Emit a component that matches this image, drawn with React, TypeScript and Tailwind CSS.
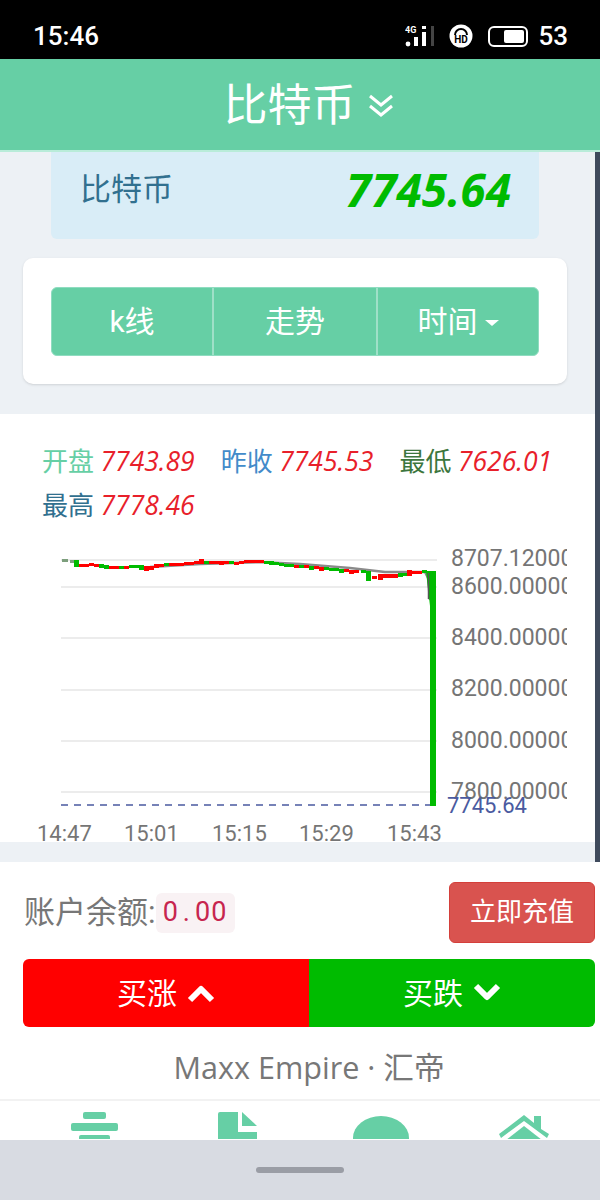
const up = "#ff0000";
const down = "#00bb00";

// [x, top, height, colour]
const candles: [number, number, number, string][] = [
  [76, 560, 7, down], [81, 564, 3, up], [86, 564, 3, up], [91, 563, 3, up], [96, 564, 3, up], [101, 564, 4, down],
  [106, 565, 4, down], [111, 566, 3, up], [116, 566, 3, up], [121, 566, 3, down], [126, 566, 3, up], [131, 565, 3, down],
  [136, 565, 3, down], [141, 565, 5, down], [146, 566, 5, up], [151, 566, 4, up], [156, 564, 4, up], [161, 564, 3, up],
  [166, 563, 3, down], [171, 563, 3, up], [176, 563, 3, up], [181, 563, 3, up], [186, 562, 3, up], [191, 562, 3, up],
  [196, 561, 3, up], [201, 559, 5, up], [206, 561, 3, down], [211, 561, 3, up], [216, 561, 3, up], [221, 561, 4, up],
  [226, 561, 3, up], [231, 561, 3, down], [236, 562, 3, up], [241, 561, 3, up], [246, 560, 3, up], [251, 560, 3, up],
  [256, 560, 3, up], [261, 560, 3, up], [266, 561, 3, down], [271, 561, 4, down], [276, 562, 3, down], [281, 563, 3, down],
  [286, 564, 3, down], [291, 564, 3, down], [296, 565, 3, up], [301, 565, 3, down], [306, 565, 3, up], [311, 566, 4, down],
  [316, 566, 3, up], [321, 567, 4, up], [326, 567, 3, down], [331, 568, 3, down], [336, 568, 3, down], [341, 569, 4, down],
  [346, 569, 3, up], [351, 570, 4, up], [356, 570, 3, up], [363, 570, 3, down], [368, 571, 10, down], [374, 576, 3, up],
  [380, 574, 6, up], [385, 574, 4, up], [390, 574, 4, up], [395, 574, 4, up], [400, 573, 4, down], [405, 573, 3, down],
  [409, 570, 6, up], [414, 571, 3, up], [419, 571, 3, up], [424, 570, 3, down],
];

const gridLines = [560, 587, 638, 690, 741, 792];

const axisLabels: [string, number][] = [
  ["8707.12000", 566],
  ["8600.00000", 594],
  ["8400.00000", 645],
  ["8200.00000", 696],
  ["8000.00000", 748],
  ["7800.00000", 799],
];

const timeLabels: [string, number][] = [
  ["14:47", 37],
  ["15:01", 124],
  ["15:15", 212],
  ["15:29", 299],
  ["15:43", 387],
];

function StatusBar() {
  return (
    <div className="flex h-[59px] shrink-0 items-center justify-between bg-black pl-[33px] pr-[32px] pt-[13px] text-white">
      <span className="text-[26px] font-medium leading-none">15:46</span>
      <div className="flex items-center">
        <svg width="30" height="24" viewBox="0 0 30 24" fill="white">
          <text x="0" y="9" fontSize="9" fontWeight="700" fontFamily="Roboto">4G</text>
          <circle cx="3" cy="20" r="2.4" />
          <rect x="9" y="13" width="4" height="9" />
          <rect x="17" y="8" width="4" height="14" />
          <rect x="17" y="2" width="4" height="3" />
          <rect x="26" y="2" width="3" height="20" fill="#444" />
        </svg>
        <svg className="ml-[14px]" width="24" height="24" viewBox="0 0 24 24">
          <circle cx="12" cy="12" r="11.5" fill="white" />
          <path d="M6 11a6 6 0 0 1 12 0" stroke="black" strokeWidth="2" fill="none" />
          <text x="12" y="19" fontSize="10" fontWeight="700" fontFamily="Roboto" textAnchor="middle" fill="black">HD</text>
        </svg>
        <div className="ml-[15px] flex h-[21px] w-[40px] items-center justify-end rounded-[6px] border-2 border-white pr-[2px]">
          <div className="h-[13px] w-[20px] rounded-[2px] bg-white" />
        </div>
        <span className="ml-[10px] text-[26px] font-medium leading-none">53</span>
      </div>
    </div>
  );
}

function PriceChart() {
  return (
    <svg width="595" height="302" viewBox="0 540 595 302" className="block overflow-visible">
      <defs>
        <clipPath id="axis-clip">
          <rect x="440" y="540" width="127" height="265" />
        </clipPath>
      </defs>
      {gridLines.map((y) => (
        <rect key={y} x="61" y={y - 1} width="376" height="2" fill="#ececec" />
      ))}
      <polyline
        points="150,567 200,564 260,562 300,564 350,568 385,572 410,572 425,572 428,578 430,600"
        fill="none"
        stroke="#8a8a8a"
        strokeWidth="2.5"
      />
      <rect x="62" y="559" width="6" height="3" fill="#7d9f7d" />
      <rect x="70" y="560" width="5" height="3" fill="#7d9f7d" />
      {candles.map(([x, y, h, c]) => (
        <rect key={x} x={x - 2} y={y} width="5" height={h} fill={c} />
      ))}
      <path d="M426 571h10v40v195h-6v-200z" fill={down} />
      <path d="M428.5 573v26" stroke="#555" strokeWidth="1.5" />
      <line x1="61" y1="805" x2="430" y2="805" stroke="#4a5aa0" strokeWidth="1.5" strokeDasharray="7 6" />
      <g clipPath="url(#axis-clip)" fill="#757575" fontSize="23">
        {axisLabels.map(([t, y]) => (
          <text key={t} x="451" y={y}>{t}</text>
        ))}
      </g>
      <text x="447" y="813" fontSize="22" fill="#4a5aa0">7745.64</text>
      <g fill="#757575" fontSize="22">
        {timeLabels.map(([t, x]) => (
          <text key={t} x={x} y="841">{t}</text>
        ))}
      </g>
    </svg>
  );
}

function Stat({ label, value, color }: { label: string; value: string; color: string }) {
  return (
    <span className="whitespace-nowrap">
      <span className={color}>{label}</span>{" "}
      <span className="font-['Open_Sans'] text-[26.5px] italic text-[#e8202a]">{value}</span>
    </span>
  );
}

function BottomTabs() {
  return (
    <div className="grid h-[40px] grid-cols-4 justify-items-center overflow-hidden border-t-2 border-[#f2f2f2] pl-[23px] pr-[5px] pt-[11px]">
      <svg width="48" height="30" viewBox="0 0 48 30" fill="#66cfa5">
        <rect x="12" y="0" width="23" height="7" rx="2" />
        <rect x="0" y="11" width="47" height="8" rx="2" />
        <rect x="8" y="23" width="31" height="7" rx="2" />
      </svg>
      <svg width="40" height="30" viewBox="0 0 40 30" fill="#66cfa5">
        <path d="M0 2a2 2 0 0 1 2-2h18v20h19v10H0z" />
        <path d="M24 0l15 14H24z" />
      </svg>
      <svg width="56" height="30" viewBox="0 0 56 30" fill="#66cfa5">
        <ellipse cx="28" cy="26" rx="28" ry="22" />
      </svg>
      <svg width="50" height="30" viewBox="0 0 50 30" fill="#66cfa5">
        <path d="M0 22L25 3l10 8V4h7v13l8 5-2 4L25 9 2 26z" />
        <path d="M7 28L25 14l18 14v2H7z" />
      </svg>
    </div>
  );
}

export default function App() {
  return (
    <div className="flex h-[1200px] w-[600px] flex-col overflow-hidden bg-white font-['Roboto','Noto_Sans_CJK_SC',sans-serif]">
      <StatusBar />
      <header className="flex h-[93px] shrink-0 items-center justify-center border-b-2 border-[#b9ecd9] bg-[#66cfa5] pl-[17px] pt-[3px] text-white">
        <span className="text-[44px] leading-none">比特币</span>
        <svg className="ml-[12px]" width="26" height="24" viewBox="0 0 26 24" fill="none" stroke="white" strokeWidth="3">
          <path d="M2 2l11 9 11-9" />
          <path d="M2 12l11 9 11-9" />
        </svg>
      </header>

      <div className="flex h-[710px] shrink-0">
        <main className="flex min-w-0 flex-1 flex-col bg-[#edf1f5]">
          <div className="mx-[51px] flex h-[87px] w-[488px] shrink-0 items-start justify-between rounded-b-[6px] bg-[#d9edf7] pl-[29px] pr-[28px]">
            <span className="mt-[22px] text-[31px] leading-none text-[#31708f]">比特币</span>
            <span className="mt-[9px] font-['Open_Sans'] text-[46px] font-bold italic leading-[56px] text-[#00bb00]">7745.64</span>
          </div>

          <div className="mx-[23px] mt-[19px] flex h-[126px] w-[544px] shrink-0 items-center justify-center rounded-[10px] bg-white shadow-sm">
            <div className="flex h-[69px] w-[488px] overflow-hidden rounded-[6px] border border-[#8fdcc0] bg-[#66cfa5] text-[30px] text-white">
              <div className="flex w-[162px] items-center justify-center border-r-2 border-[#9fe0c8]">k线</div>
              <div className="flex w-[164px] items-center justify-center border-r-2 border-[#9fe0c8]">走势</div>
              <div className="flex flex-1 items-center justify-center">
                时间
                <span className="ml-[7px] mt-[4px] h-0 w-0 border-x-[7px] border-t-[6px] border-x-transparent border-t-white" />
              </div>
            </div>
          </div>

          <section className="mt-[30px] flex h-[428px] shrink-0 flex-col bg-white">
            <div className="flex flex-wrap gap-x-[26px] pl-[42px] pr-[20px] pt-[26px] text-[26px] leading-[43px]">
              <Stat label="开盘" value="7743.89" color="text-[#66cfa5]" />
              <Stat label="昨收" value="7745.53" color="text-[#428bca]" />
              <Stat label="最低" value="7626.01" color="text-[#3c763d]" />
              <Stat label="最高" value="7778.46" color="text-[#31708f]" />
            </div>
            <div className="mt-auto">
              <PriceChart />
            </div>
          </section>
        </main>
        <div className="w-[5px] shrink-0 bg-[#3f4a5c]" />
      </div>

      <footer className="flex min-h-0 flex-1 flex-col">
        <div className="flex items-center justify-between pl-[24px] pr-[5px] pt-[20px]">
          <div className="flex items-center text-[31px] leading-none text-[#777777]">
            <span>账户余额:</span>
            <code className="flex h-[40px] w-[79px] items-center justify-center rounded-[6px] bg-[#f9f2f4] font-['Roboto'] text-[27px] tracking-[1px] text-[#c7254e]">
              0<span className="mx-[4px]">.</span>00
            </code>
          </div>
          <button className="h-[61px] w-[146px] rounded-[6px] border border-[#d43f3a] bg-[#d9534f] text-[26px] text-white">立即充值</button>
        </div>

        <div className="ml-[23px] mr-[5px] mt-[16px] flex h-[68px] overflow-hidden rounded-[6px] text-[30px] text-white">
          <button className="flex w-[286px] items-center justify-center bg-[#ff0000]">
            买涨
            <svg className="ml-[10px]" width="28" height="20" viewBox="0 0 28 20" fill="none" stroke="white" strokeWidth="6" strokeLinejoin="round">
              <path d="M3 17L14 6l11 11" />
            </svg>
          </button>
          <button className="flex flex-1 items-center justify-center bg-[#00bb00]">
            买跌
            <svg className="ml-[10px]" width="28" height="20" viewBox="0 0 28 20" fill="none" stroke="white" strokeWidth="6" strokeLinejoin="round">
              <path d="M3 3l11 11L25 3" />
            </svg>
          </button>
        </div>

        <p className="mt-[20px] pl-[18px] text-center font-['Open_Sans','Noto_Sans_CJK_SC',sans-serif] text-[30.6px] leading-[41px] text-[#777777]">Maxx Empire · 汇帝</p>
        <div className="mt-[11px]">
          <BottomTabs />
        </div>
      </footer>

      <div className="flex h-[60px] shrink-0 items-center justify-center bg-[#d8dbe2]">
        <div className="h-[6px] w-[88px] rounded-full bg-[#9a9da5]" />
      </div>
    </div>
  );
}
